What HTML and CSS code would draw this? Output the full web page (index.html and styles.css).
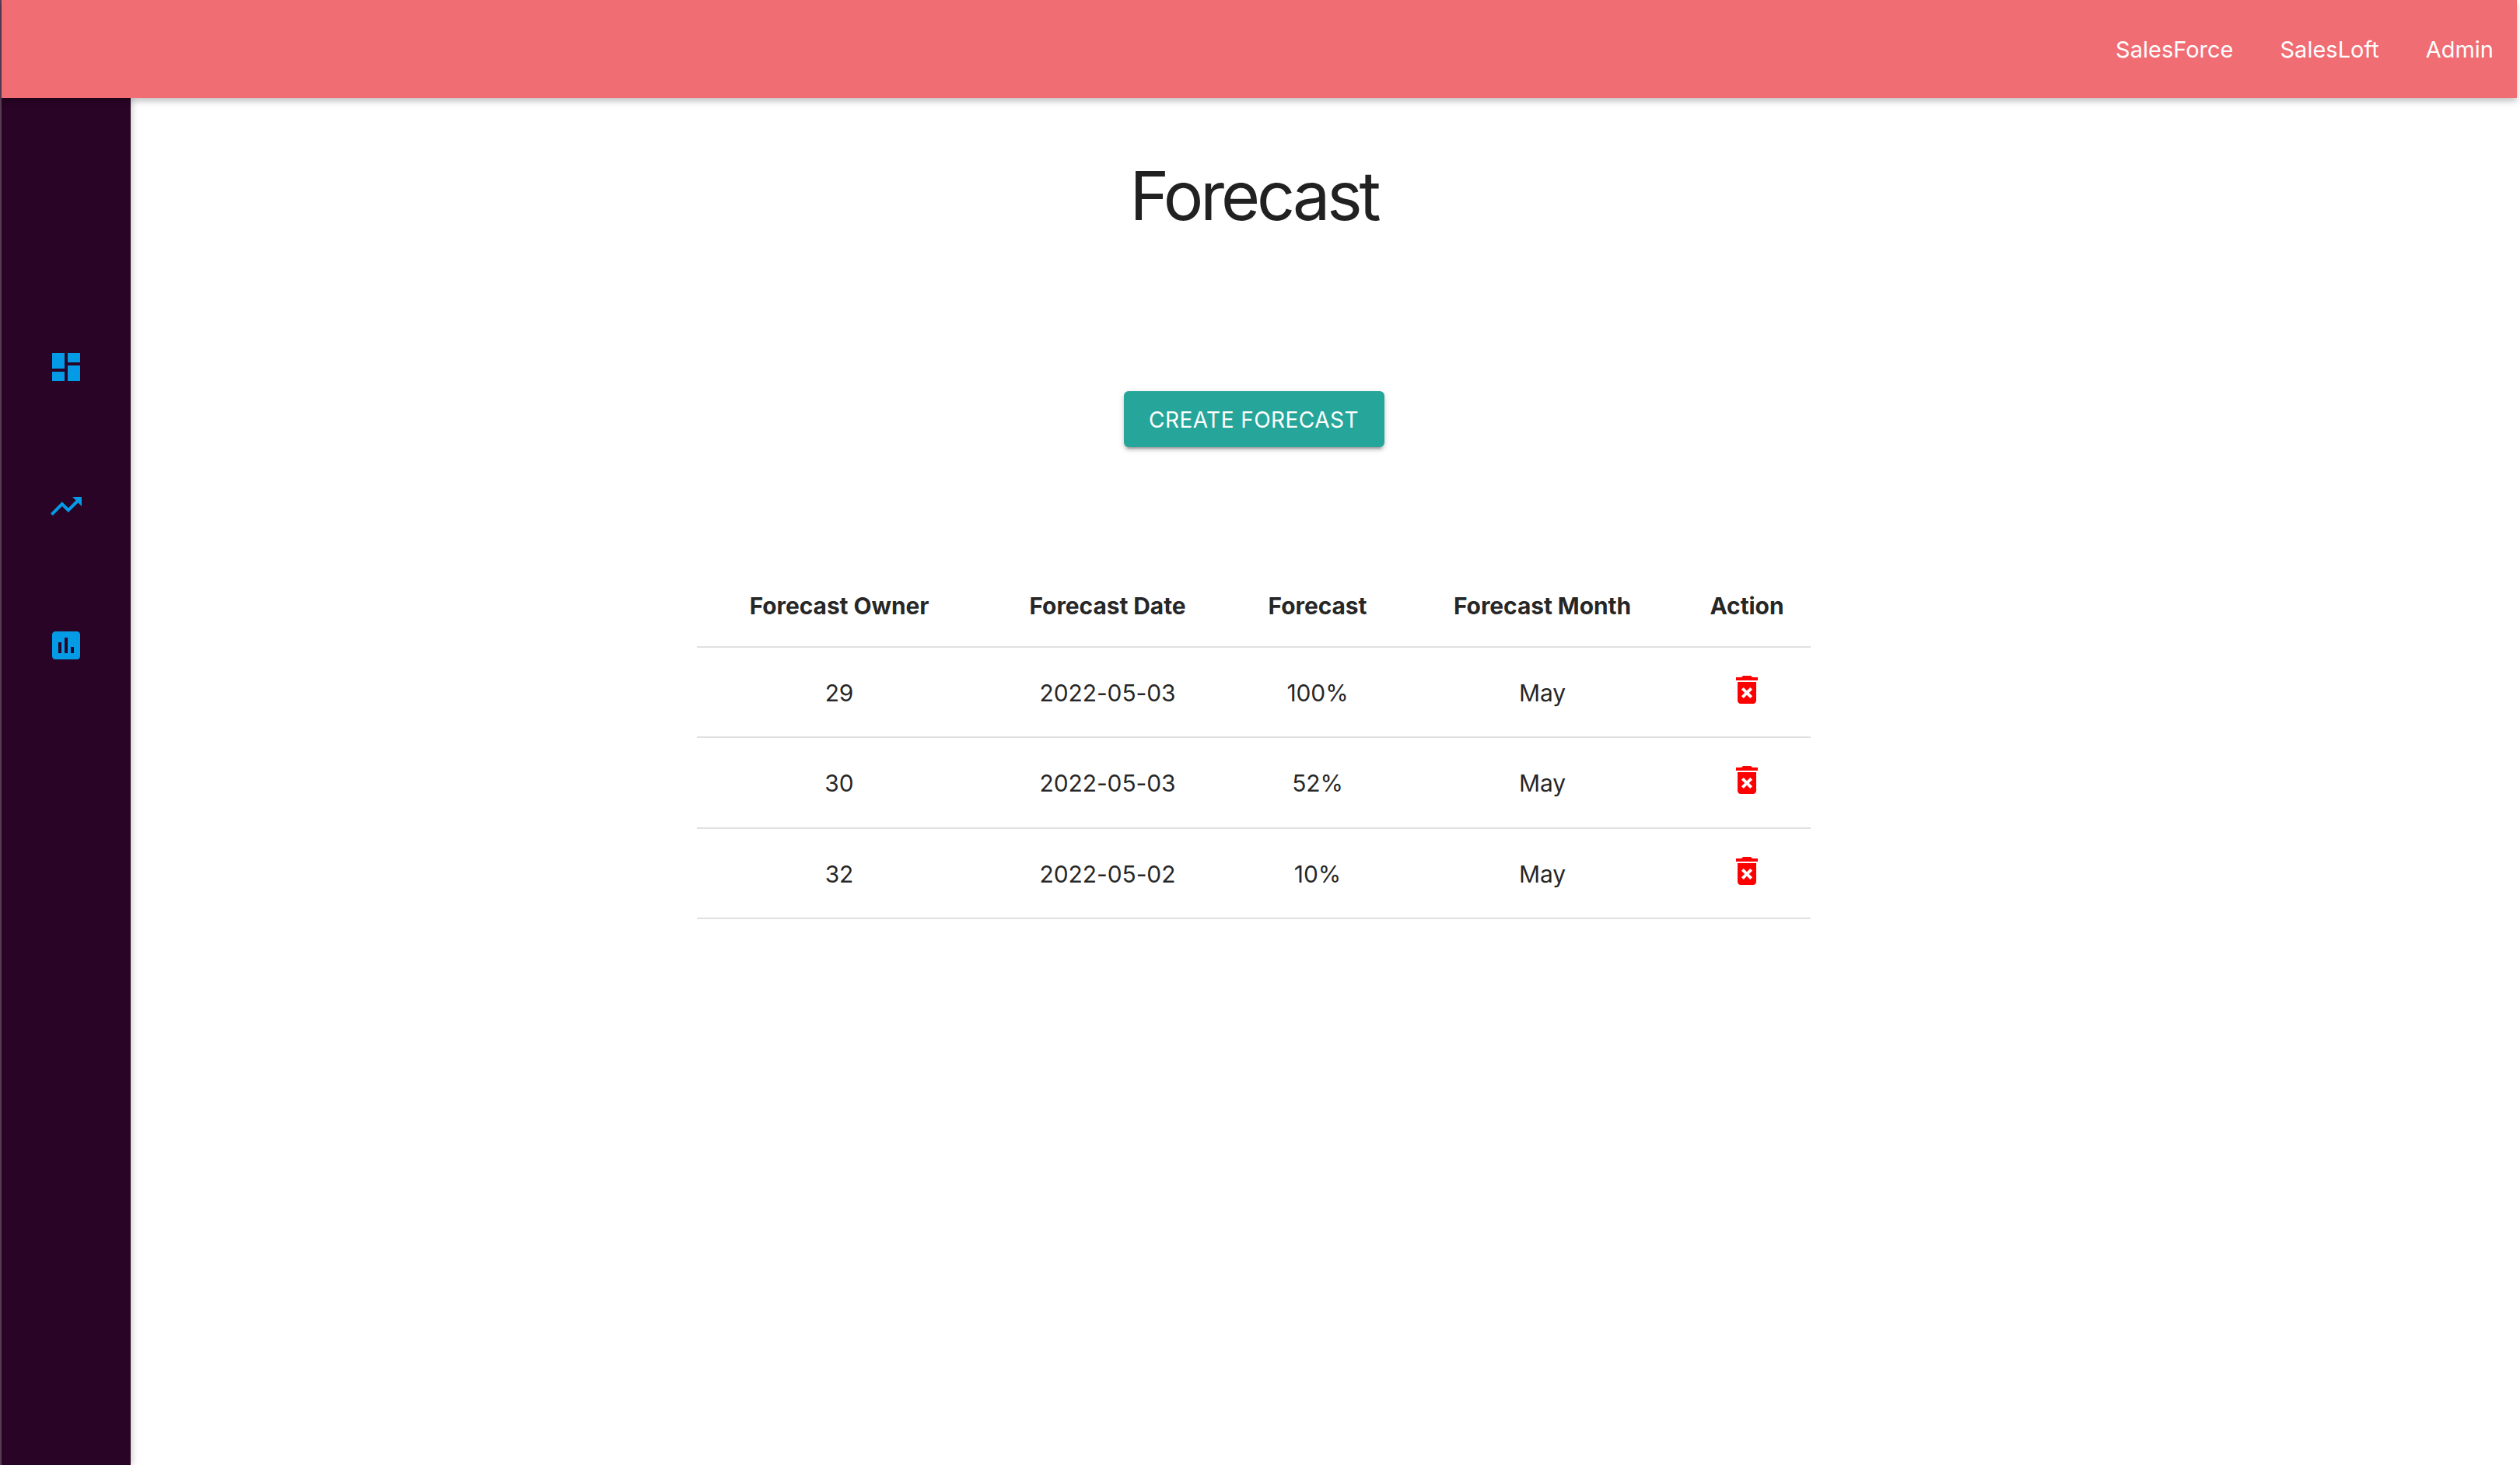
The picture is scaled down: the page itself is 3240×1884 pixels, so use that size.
FILE: index.html
```html
<!DOCTYPE html>
<html lang="en">
<head>
  <meta charset="UTF-8">
  <title>Forecast</title>
  <link rel="stylesheet" href="styles.css">
</head>
<body>
  <div class="app">
    <header class="topbar">
      <a class="nav-link">SalesForce</a>
      <a class="nav-link">SalesLoft</a>
      <a class="nav-link">Admin</a>
    </header>

    <div class="layout">
      <nav class="sidebar">
        <svg class="side-icon" viewBox="0 0 24 24"><path d="M3 13h8V3H3v10zm0 8h8v-6H3v6zm10 0h8V11h-8v10zm0-18v6h8V3h-8z"/></svg>
        <svg class="side-icon" viewBox="0 0 24 24"><path d="M16 6l2.29 2.29-4.88 4.88-4-4L2 16.59 3.41 18l6-6 4 4 6.3-6.29L22 12V6z"/></svg>
        <svg class="side-icon" viewBox="0 0 24 24"><path d="M19 3H5c-1.1 0-2 .9-2 2v14c0 1.1.9 2 2 2h14c1.1 0 2-.9 2-2V5c0-1.1-.9-2-2-2zM9 17H7v-7h2v7zm4 0h-2V7h2v10zm4 0h-2v-4h2v4z"/></svg>
      </nav>

      <main class="content">
        <h1 class="title">Forecast</h1>
        <button class="create-btn">Create Forecast</button>

        <table class="forecast-table">
          <thead>
            <tr>
              <th>Forecast Owner</th>
              <th>Forecast Date</th>
              <th>Forecast</th>
              <th>Forecast Month</th>
              <th>Action</th>
            </tr>
          </thead>
          <tbody>
            <tr>
              <td>29</td>
              <td>2022-05-03</td>
              <td>100%</td>
              <td>May</td>
              <td><svg class="delete-icon" viewBox="0 0 24 24"><path d="M6 19c0 1.1.9 2 2 2h8c1.1 0 2-.9 2-2V7H6v12zm2.46-7.12l1.41-1.41L12 12.59l2.12-2.12 1.41 1.41L13.41 14l2.12 2.12-1.41 1.41L12 15.41l-2.12 2.12-1.41-1.41L10.59 14l-2.13-2.12zM15.5 4l-1-1h-5l-1 1H5v2h14V4z"/></svg></td>
            </tr>
            <tr>
              <td>30</td>
              <td>2022-05-03</td>
              <td>52%</td>
              <td>May</td>
              <td><svg class="delete-icon" viewBox="0 0 24 24"><path d="M6 19c0 1.1.9 2 2 2h8c1.1 0 2-.9 2-2V7H6v12zm2.46-7.12l1.41-1.41L12 12.59l2.12-2.12 1.41 1.41L13.41 14l2.12 2.12-1.41 1.41L12 15.41l-2.12 2.12-1.41-1.41L10.59 14l-2.13-2.12zM15.5 4l-1-1h-5l-1 1H5v2h14V4z"/></svg></td>
            </tr>
            <tr>
              <td>32</td>
              <td>2022-05-02</td>
              <td>10%</td>
              <td>May</td>
              <td><svg class="delete-icon" viewBox="0 0 24 24"><path d="M6 19c0 1.1.9 2 2 2h8c1.1 0 2-.9 2-2V7H6v12zm2.46-7.12l1.41-1.41L12 12.59l2.12-2.12 1.41 1.41L13.41 14l2.12 2.12-1.41 1.41L12 15.41l-2.12 2.12-1.41-1.41L10.59 14l-2.13-2.12zM15.5 4l-1-1h-5l-1 1H5v2h14V4z"/></svg></td>
            </tr>
          </tbody>
        </table>
      </main>
    </div>
  </div>
</body>
</html>
```

FILE: styles.css
```css
html, body { margin: 0; height: 100%; background: #fff; overflow: hidden; }
body { font-family: Inter, "Liberation Sans", sans-serif; color: rgba(0,0,0,0.87); }

.app { width: 3236px; height: 1884px; display: flex; flex-direction: column; border-left: 2px solid #5a3f57; box-sizing: border-box; }

.topbar { position: relative; z-index: 2; height: 126px; flex: none; box-sizing: border-box; padding: 0 30px 0 0; display: flex; justify-content: flex-end; align-items: center; gap: 60px; background: #f16d74; box-shadow: 0 4px 8px rgba(0,0,0,0.25); }
.nav-link { font-size: 29px; color: #fff; }

.layout { flex: 1; display: flex; min-height: 0; }

.sidebar { position: relative; z-index: 1; width: 166px; flex: none; box-sizing: border-box; padding-top: 322px; display: flex; flex-direction: column; align-items: center; gap: 131px; background: #2a0426; box-shadow: 2px 0 8px rgba(0,0,0,0.2); }
.side-icon { width: 48px; height: 48px; fill: #039be5; }

.content { flex: 1; padding-right: 180px; display: flex; flex-direction: column; align-items: center; }

.title { margin: 78px 0 0; font-size: 86px; line-height: 96px; font-weight: 400; letter-spacing: -4.1px; }

.create-btn { margin-top: 203px; width: 335px; height: 72px; padding: 2px 0 0; border: none; border-radius: 6px; background: #26a69a; color: #fff; font-family: inherit; font-size: 28px; font-weight: 400; letter-spacing: 0.45px; text-transform: uppercase; box-shadow: 0 6px 2px -4px rgba(0,0,0,0.2), 0 4px 4px rgba(0,0,0,0.14), 0 2px 10px rgba(0,0,0,0.12); }

.forecast-table { margin-top: 141px; width: 1432px; table-layout: fixed; border-collapse: collapse; font-size: 30px; }
.forecast-table th, .forecast-table td { padding: 0; text-align: center; border-bottom: 2px solid #e0e0e0; box-sizing: border-box; }
.forecast-table th { height: 116px; padding-top: 10px; font-weight: 700; letter-spacing: -0.1px; }
.forecast-table td { height: 116.33px; padding-top: 2px; letter-spacing: -0.1px; }
.forecast-table th:nth-child(1) { width: 366px; }
.forecast-table th:nth-child(2) { width: 324px; }
.forecast-table th:nth-child(3) { width: 216px; }
.forecast-table th:nth-child(4) { width: 362px; }
.forecast-table th:nth-child(5) { width: 164px; }

.delete-icon { display: block; width: 48px; height: 48px; margin: -8px auto 0; fill: #f00; }
```
